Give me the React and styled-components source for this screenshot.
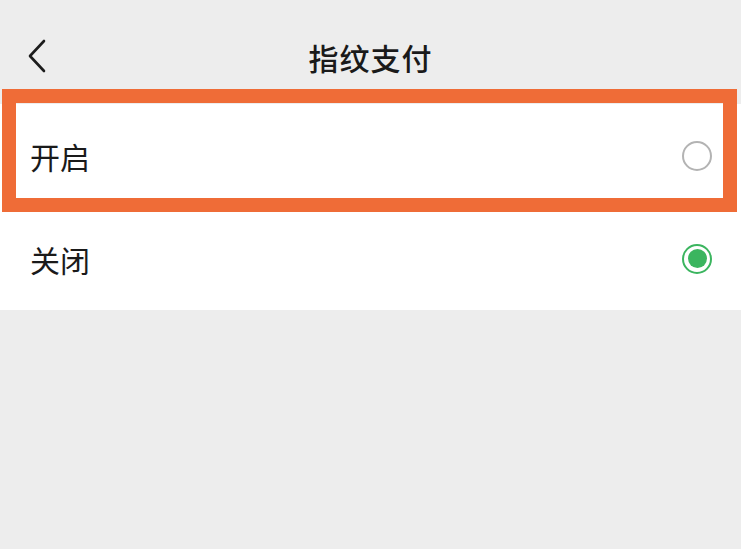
import React from 'react';
import styled, { createGlobalStyle } from 'styled-components';

const GlobalStyle = createGlobalStyle`
  html, body {
    margin: 0;
    padding: 0;
    background: #ededed;
    font-family: 'Noto Sans CJK SC', 'Noto Sans', sans-serif;
  }
`;

const options = [
  { label: '开启', checked: false },
  { label: '关闭', checked: true },
];

const App = () => {
  return (
    <Page>
      <GlobalStyle />
      <Header>
        <BackButton aria-label="返回">
          <svg width="22" height="34" viewBox="0 0 22 34">
            <path
              d="M18 2 L4 17 L18 32"
              fill="none"
              stroke="#1c1c1c"
              strokeWidth="2.6"
              strokeLinecap="round"
              strokeLinejoin="round"
            />
          </svg>
        </BackButton>
        <Title>指纹支付</Title>
      </Header>
      <List>
        {options.map((opt) => (
          <Row key={opt.label}>
            <Label>{opt.label}</Label>
            <Radio checked={opt.checked} />
          </Row>
        ))}
        <Highlight />
      </List>
    </Page>
  );
};

const Page = styled.div`
  width: 741px;
  height: 549px;
  background: #ededed;
  overflow: hidden;
`;

const Header = styled.div`
  height: 104px;
  box-sizing: border-box;
  padding-top: 10px;
  display: flex;
  align-items: center;
  justify-content: center;
  position: relative;
`;

const BackButton = styled.div`
  position: absolute;
  left: 26px;
  top: 39px;
  display: flex;
`;

const Title = styled.div`
  font-size: 30px;
  font-weight: 500;
  color: #1a1a1a;
  letter-spacing: 1px;
`;

const List = styled.div`
  position: relative;
  background: #fff;
`;

const Row = styled.div`
  height: 103px;
  display: flex;
  align-items: center;
  justify-content: space-between;
  padding: 0 29px 0 30px;
`;

const Label = styled.div`
  font-size: 30px;
  color: #1a1a1a;
`;

const Radio = styled.div`
  width: 30px;
  height: 30px;
  box-sizing: border-box;
  border-radius: 50%;
  border: 2px solid ${({ checked }) => (checked ? '#3bb55f' : '#b3b3b3')};
  display: flex;
  align-items: center;
  justify-content: center;

  &::after {
    content: '';
    display: ${({ checked }) => (checked ? 'block' : 'none')};
    width: 19px;
    height: 19px;
    border-radius: 50%;
    background: #3bb55f;
  }
`;

const Highlight = styled.div`
  position: absolute;
  left: 2px;
  top: -15px;
  width: 735px;
  height: 123px;
  box-sizing: border-box;
  border: 14px solid #ef6c37;
  pointer-events: none;
`;

export default App;
